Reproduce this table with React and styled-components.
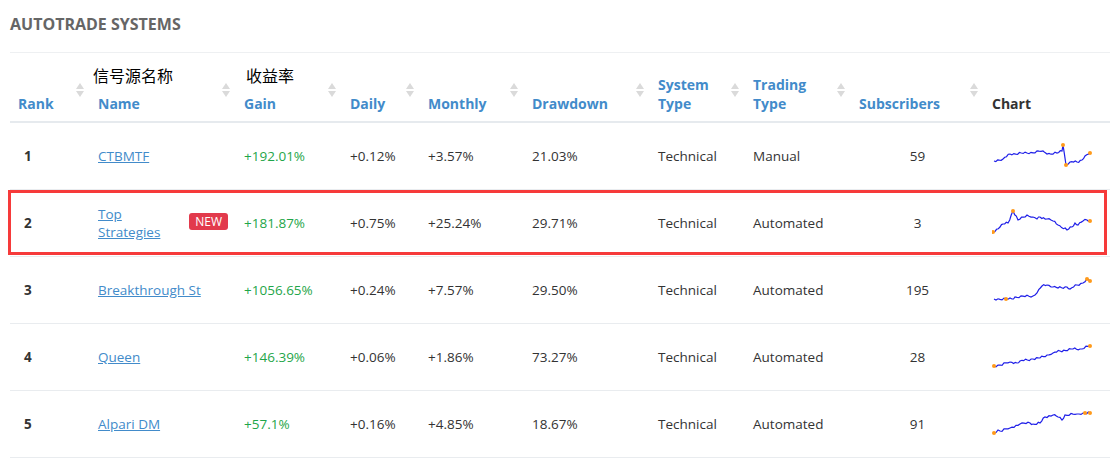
import React from "react";
import styled, { createGlobalStyle, css } from "styled-components";

const GlobalStyle = createGlobalStyle`
  html, body { margin: 0; padding: 0; background: #fff; }
  body { font-family: "Open Sans", "Noto Sans", Arial, sans-serif; color: #333; }
`;

const COLS = "80px 146px 106px 78px 104px 126px 95px 106px 133px 126px";

const Page = styled.div`
  padding: 0 4px 0 10px;
`;

const Title = styled.h2`
  margin: 0;
  padding-top: 12px;
  height: 40px;
  line-height: 24px;
  font-size: 16px;
  font-weight: 700;
  color: #666;
  letter-spacing: 0;
`;

const Table = styled.div`
  border-top: 1px solid #eef0f2;
`;

const HeaderRow = styled.div`
  display: grid;
  grid-template-columns: ${COLS};
  height: 68px;
  border-bottom: 2px solid #e6eaee;
`;

const HeaderCell = styled.div`
  display: flex;
  justify-content: space-between;
  padding: 0 6px 8px 8px;
  min-width: 0;
`;

const HeaderLabel = styled.div`
  align-self: flex-end;
  font-size: 14px;
  font-weight: 700;
  line-height: 19px;
  color: ${(p) => p.$color || "#428bca"};
`;

const Annotation = styled.div`
  font-family: "Noto Sans CJK SC", "Noto Sans", sans-serif;
  font-size: 16px;
  font-weight: 400;
  line-height: 20px;
  color: #000;
  margin: 0 0 9px ${(p) => p.$shift || 0}px;
  white-space: nowrap;
`;

const SortIconSvg = styled.svg`
  flex: none;
  align-self: center;
  margin-top: 14px;
`;

const BodyRow = styled.div`
  display: grid;
  grid-template-columns: ${COLS};
  height: 66px;
  align-items: center;
  border-bottom: 1px solid #e9ecef;
  position: relative;
  ${(p) =>
    p.$highlight &&
    css`
      &::after {
        content: "";
        position: absolute;
        left: -2px;
        right: 3px;
        top: 0;
        bottom: 1px;
        border: 3px solid #f63a3a;
        pointer-events: none;
      }
    `}
`;

const Cell = styled.div`
  padding: 0 8px 0 ${(p) => p.$indent || 8}px;
  font-size: 13.5px;
  line-height: 18px;
  color: ${(p) => p.$color || "#333"};
  font-weight: ${(p) => (p.$bold ? 700 : 400)};
  text-align: ${(p) => (p.$center ? "center" : "left")};
  white-space: nowrap;
`;

const NameCell = styled(Cell)`
  display: flex;
  justify-content: space-between;
  align-items: center;
  white-space: normal;
`;

const NameLink = styled.a`
  color: #428bca;
  text-decoration: underline;
  max-width: ${(p) => p.$maxWidth || "none"};
  white-space: ${(p) => (p.$maxWidth ? "normal" : "nowrap")};
`;

const Badge = styled.span`
  flex: none;
  background: #e23a4c;
  color: #fff;
  font-size: 12px;
  line-height: 17px;
  padding: 0 6px;
  border-radius: 3px;
  margin-top: -4px;
`;

const ChartCell = styled.div`
  padding: 0 8px;
  display: flex;
  align-items: center;
`;

const SortIcon = () => (
  <SortIconSvg width="8" height="14" viewBox="0 0 8 14">
    <path d="M4 0 L8 6 L0 6 Z" fill="#dadada" />
    <path d="M0 8 L8 8 L4 14 Z" fill="#dadada" />
  </SortIconSvg>
);

const headers = [
  { label: "Rank" },
  { label: "Name", note: "信号源名称", shift: -5 },
  { label: "Gain", note: "收益率", shift: 2 },
  { label: "Daily" },
  { label: "Monthly" },
  { label: "Drawdown" },
  { label: ["System", "Type"] },
  { label: ["Trading", "Type"] },
  { label: "Subscribers" },
  { label: "Chart", plain: true },
];

const rows = [
  {
    rank: 1, name: "CTBMTF", gain: "+192.01%", daily: "+0.12%", monthly: "+3.57%",
    dd: "21.03%", sys: "Technical", trade: "Manual", subs: 59,
    pts: [[994,161],[1003,159],[1010,154],[1027,153],[1043,151],[1047,154],[1057,153],[1062,151],[1063,145],[1066,165],[1070,162],[1077,162],[1082,160],[1085,156],[1090,153]],
    dots: [8, 9, 14],
  },
  {
    rank: 2, name: "Top Strategies", isNew: true, gain: "+181.87%", daily: "+0.75%", monthly: "+25.24%",
    dd: "29.71%", sys: "Technical", trade: "Automated", subs: 3, highlight: true,
    pts: [[993,232],[1000,227],[1003,224],[1008,223],[1013,211],[1018,220],[1027,215],[1033,217],[1037,219],[1040,217],[1047,219],[1053,221],[1058,225],[1067,230],[1072,227],[1075,223],[1078,225],[1083,221],[1087,220],[1090,221]],
    dots: [0, 4, 19],
  },
  {
    rank: 3, name: "Breakthrough St", gain: "+1056.65%", daily: "+0.24%", monthly: "+7.57%",
    dd: "29.50%", sys: "Technical", trade: "Automated", subs: 195,
    pts: [[994,299],[1006,299],[1012,299],[1015,297],[1033,296],[1037,293],[1042,286],[1047,285],[1053,287],[1058,288],[1067,287],[1070,289],[1077,285],[1083,283],[1087,279],[1090,281]],
    dots: [1, 14, 15],
  },
  {
    rank: 4, name: "Queen", gain: "+146.39%", daily: "+0.06%", monthly: "+1.86%",
    dd: "73.27%", sys: "Technical", trade: "Automated", subs: 28,
    pts: [[994,366],[1000,365],[1010,362],[1017,363],[1020,361],[1033,359],[1040,358],[1047,355],[1053,353],[1060,351],[1073,349],[1080,349],[1090,346]],
    dots: [0, 12],
  },
  {
    rank: 5, name: "Alpari DM", gain: "+57.1%", daily: "+0.16%", monthly: "+4.85%",
    dd: "18.67%", sys: "Technical", trade: "Automated", subs: 91,
    pts: [[994,433],[998,430],[1000,431],[1010,428],[1020,424],[1030,423],[1033,424],[1040,423],[1045,417],[1053,415],[1058,417],[1062,420],[1065,415],[1077,414],[1085,413],[1090,413]],
    dots: [0, 14, 15],
  },
];

const Sparkline = ({ pts, dots, top }) => {
  const local = pts.map(([x, y]) => [x - 992, y - top]);
  const dense = [];
  let k = 0;
  for (let i = 0; i < local.length - 1; i++) {
    const [x0, y0] = local[i];
    const [x1, y1] = local[i + 1];
    const steps = Math.max(1, Math.round((x1 - x0) / 2));
    for (let s = 0; s < steps; s++) {
      const t = s / steps;
      const noise = s === 0 ? 0 : Math.sin(k * 2.1) * 0.8 + Math.sin(k * 0.7) * 0.5;
      dense.push([x0 + (x1 - x0) * t, y0 + (y1 - y0) * t + noise]);
      k++;
    }
  }
  dense.push(local[local.length - 1]);
  const d = dense.map(([x, y]) => `${x.toFixed(1)},${y.toFixed(1)}`).join(" ");
  return (
    <svg width="100" height="40" viewBox="0 0 100 40">
      <polyline points={d} fill="none" stroke="#1f1fe8" strokeWidth="1.2" />
      {dots.map((i) => (
        <circle key={i} cx={local[i][0]} cy={local[i][1]} r="2" fill="#ff9a1a" />
      ))}
    </svg>
  );
};

export default function App() {
  return (
    <>
      <GlobalStyle />
      <Page>
        <Title>AUTOTRADE SYSTEMS</Title>
        <Table>
          <HeaderRow>
            {headers.map((h, i) => (
              <HeaderCell key={i}>
                <HeaderLabel $color={h.plain ? "#333" : undefined}>
                  {h.note && <Annotation $shift={h.shift}>{h.note}</Annotation>}
                  {Array.isArray(h.label)
                    ? h.label.map((l) => <div key={l}>{l}</div>)
                    : h.label}
                </HeaderLabel>
                {!h.plain && <SortIcon />}
              </HeaderCell>
            ))}
          </HeaderRow>
          {rows.map((r, i) => (
            <BodyRow key={r.rank} $highlight={r.highlight}>
              <Cell $bold $indent={14}>{r.rank}</Cell>
              <NameCell>
                <NameLink href="#" $maxWidth={r.isNew ? "70px" : undefined}>
                  {r.name}
                </NameLink>
                {r.isNew && <Badge>NEW</Badge>}
              </NameCell>
              <Cell $color="#1fa64a">{r.gain}</Cell>
              <Cell>{r.daily}</Cell>
              <Cell>{r.monthly}</Cell>
              <Cell>{r.dd}</Cell>
              <Cell>{r.sys}</Cell>
              <Cell>{r.trade}</Cell>
              <Cell $center>{r.subs}</Cell>
              <ChartCell>
                <Sparkline pts={r.pts} dots={r.dots} top={123 + i * 67 + 13} />
              </ChartCell>
            </BodyRow>
          ))}
        </Table>
      </Page>
    </>
  );
}
